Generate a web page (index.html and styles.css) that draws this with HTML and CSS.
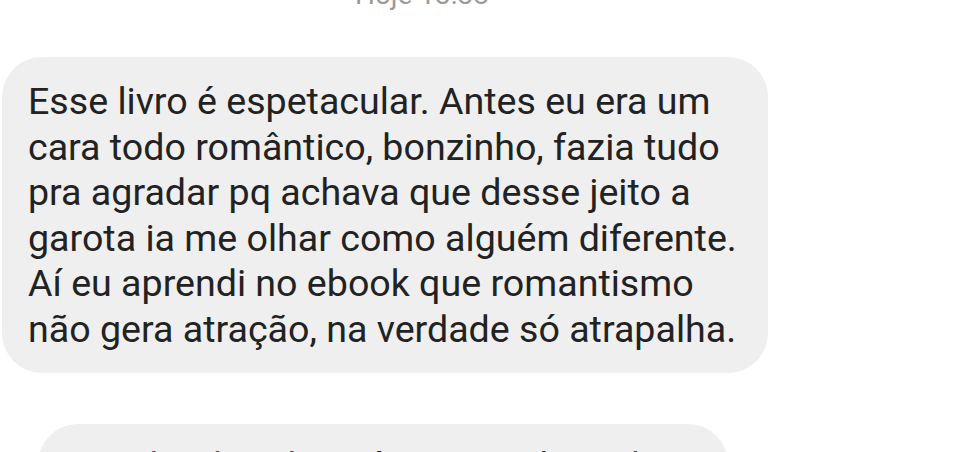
FILE: index.html
```html
<!DOCTYPE html>
<html>
<head>
    <title>Conversa</title>
    <meta name="viewport" content="width=device-width, initial-scale=1.0">
    <link rel="stylesheet" href="styles.css">
</head>
<body>
    <div class="chat">
        <div class="timestamp">Hoje 13:38</div>

        <div class="bubble first">
            Esse livro é espetacular. Antes eu era um<br>
            cara todo romântico, bonzinho, fazia tudo<br>
            pra agradar pq achava que desse jeito a<br>
            garota ia me olhar como alguém diferente.<br>
            Aí eu aprendi no ebook que romantismo<br>
            não gera atração, na verdade só atrapalha.
        </div>

        <div class="bubble second">
            Li o ebook todo e já estou aplicando
        </div>
    </div>
</body>
</html>
```

FILE: styles.css
```css
body {
    font-family: 'Roboto', sans-serif;
    background-color: #ffffff;
    margin: 0;
    overflow: hidden;
    height: 452px;
}

.chat {
    display: flex;
    flex-direction: column;
    align-items: flex-start;
}

.timestamp {
    width: 844px;
    text-align: center;
    font-size: 28px;
    line-height: 28px;
    color: #9a9a9a;
    margin-top: -19px;
}

.bubble {
    background-color: #efefef;
    color: #222222;
    font-size: 37.6px;
    line-height: 45.5px;
    border-radius: 40px;
    box-sizing: border-box;
}

.first {
    margin-top: 48px;
    margin-left: 2px;
    width: 766px;
    padding: 22px 20px 21px 26px;
}

.second {
    margin-top: 51px;
    margin-left: 38px;
    width: 690px;
    padding: 20px 20px 23px 22px;
}
```
